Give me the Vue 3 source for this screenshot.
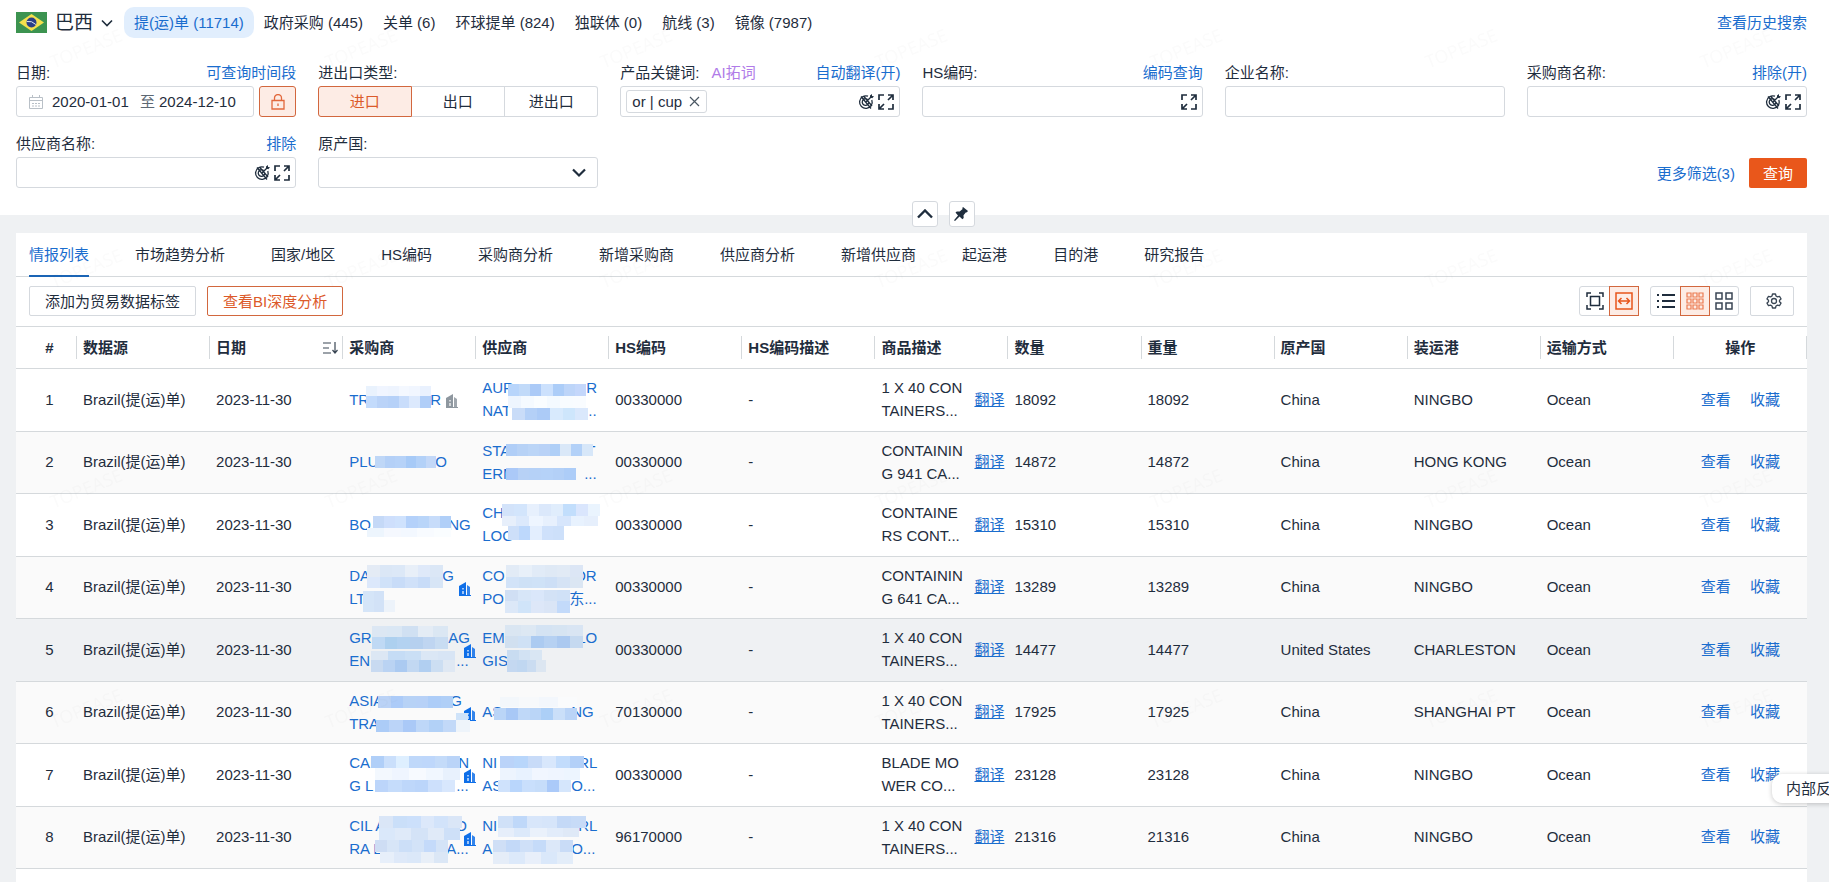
<script setup>
import { ref } from 'vue'

const sources = [
  { name: '提(运)单', count: 11714 },
  { name: '政府采购', count: 445 },
  { name: '关单', count: 6 },
  { name: '环球提单', count: 824 },
  { name: '独联体', count: 0 },
  { name: '航线', count: 3 },
  { name: '镜像', count: 7987 },
]
const activeSource = ref(0)

const directions = ['进口', '出口', '进出口']
const direction = ref('进口')
const startDate = ref('2020-01-01')
const endDate = ref('2024-12-10')

const tabs = ['情报列表', '市场趋势分析', '国家/地区', 'HS编码', '采购商分析', '新增采购商', '供应商分析', '新增供应商', '起运港', '目的港', '研究报告']
const activeTab = ref('情报列表')

const columns = ['数据源', '日期', '采购商', '供应商', 'HS编码', 'HS编码描述', '商品描述', '数量', '重量', '原产国', '装运港', '运输方式']

// line: [visible start, offset of the visible end, visible end]
// mask: [x, y, width, height, colours of the blocks from left to right]
const rows = [
  {
    icon: { x: 103, muted: true },
    buyer: [['TR', 81, 'R']],
    buyerMask: [
      [23, 17, 65, 10, '#e9f2fd #f0f5ff #eef4fe #f4f8ff #f1f6ff #e9f1fe'],
      [23, 27, 65, 12, '#c3dbfc #bad3f8 #b6d1f8 #c9ddfb #dce9fd #b0cef8'],
    ],
    supplier: [['AUR', 104, 'R'], ['NAT', 102, '...']],
    supplierMask: [
      [32, 15, 78, 12, '#b8d5fb #c1daf9 #abcaf7 #cce1fd #accdf8 #bdd5f9 #c4d7fb'],
      [32, 27, 78, 12, '#eef5fe #f5faff #fafdff #f4faff #f8fcff #f9fcff'],
      [36, 39, 76, 12, '#c9dcf8 #b4d0f7 #accbf7 #d8eafd #cee6fc #dae8fc'],
    ],
    hs: '00330000', desc: ['1 X 40 CON', 'TAINERS...'], qty: 18092, origin: 'China', port: 'NINGBO',
  },
  {
    buyer: [['PLU', 86, 'O']],
    buyerMask: [[32, 24, 61, 12, '#bfd7f7 #b4d0f7 #b6d2f8 #a7caf7 #b3d1f8 #c3d8f8']],
    supplier: [['STA', 104, 'T'], ['ERM', 102, '...']],
    supplierMask: [
      [30, 12, 87, 12, '#b0cef7 #b7d2f6 #bbd5f7 #b9d2f7 #afcff7 #dae8f8 #b3d1f8 #d7e7f9'],
      [30, 36, 70, 12, '#abc9f8 #b7d1f6 #b5d1f7 #b5d2f8 #b3d0f7 #adcdf8'],
    ],
    hs: '00330000', desc: ['CONTAININ', 'G 941 CA...'], qty: 14872, origin: 'China', port: 'HONG KONG',
  },
  {
    buyer: [['BO', 99, 'NG']],
    buyerMask: [
      [30, 22, 78, 12, '#c5d9f7 #cedffc #cfe2fd #b4d1fa #b9d5f9 #c7dcfa #b0cff8'],
      [24, 34, 84, 9, '#edf5fd #f5f8fe #f3f8ff #f8fbff #fafdff'],
    ],
    supplier: [['CH', 104, ''], ['LOG', 102, '']],
    supplierMask: [
      [26, 10, 98, 12, '#d3e3fa #d3e5fc #e7f0fd #dbe8fb #e0edfc #c2defc #dae6fd #eaf4fe'],
      [26, 22, 96, 10, '#e7effb #dce9fc #eef5ff #e7f0fd #d7e6fc #e8f2fe #e6effc'],
      [32, 32, 56, 14, '#cddff9 #bdd8fc #e3eefe #cfe1fb #cde0fa'],
    ],
    hs: '00330000', desc: ['CONTAINE', 'RS CONT...'], qty: 15310, origin: 'China', port: 'NINGBO',
  },
  {
    icon: { x: 116 },
    buyer: [['DA', 93, 'G'], ['LTD', 99, '']],
    buyerMask: [
      [24, 8, 76, 12, '#e4ebf5 #dbe7f6 #dce8f7 #e8eff8 #dfe9f9 #dbe7f6'],
      [24, 20, 76, 11, '#dce8fb #d0e2f9 #c8dcf8 #d0e1f9 #c8dcf8 #d7e5f6'],
      [20, 34, 21, 21, '#d5e5f8 #d2e2f7'],
      [41, 43, 11, 12, '#edf3fa'],
    ],
    supplier: [['CO', 92, 'OR'], ['PO', 87, '东...']],
    supplierMask: [
      [30, 8, 77, 12, '#e2ebf6 #e8f0f9 #e1ebf7 #dfe9f5 #e1eaf5 #dce6f5'],
      [30, 20, 77, 11, '#d2e3f8 #cee1f6 #cfe2f7 #cddff6 #d5e3f5 #dbe6f3'],
      [29, 33, 65, 11, '#d0dff4 #d7e6f8 #dae7fa #d3e2f6 #d0e1f7'],
      [29, 44, 65, 12, '#dce8f8 #d0e4f9 #dde7f8 #dae5f6 #c3dafa'],
    ],
    hs: '00330000', desc: ['CONTAININ', 'G 641 CA...'], qty: 13289, origin: 'China', port: 'NINGBO',
  },
  {
    icon: { x: 121 },
    buyer: [['GR', 99, 'AG'], ['EN', 107, '...']],
    buyerMask: [
      [29, 7, 76, 11, '#dce7f3 #dae7f4 #d0e0f2 #e4ecf5 #dbe7f3'],
      [29, 18, 76, 12, '#bfd9f4 #add0ef #b3d2f1 #b6d0ef #bfd5f1 #c8dcf2'],
      [28, 32, 84, 9, '#dce7f4 #c5dcf5 #cadff5 #dbe7f5 #d8e5f5'],
      [28, 41, 84, 12, '#c8daf1 #bad3f3 #abcaf1 #c2d8f2 #b1cff1 #ccdef2 #dfe8f3'],
    ],
    supplier: [['EM', 95, 'LO'], ['GIS', 102, '']],
    supplierMask: [
      [29, 6, 78, 11, '#dae6f2 #dde8f3 #d4e3f3 #d6e4f2 #d9e5f3'],
      [29, 17, 78, 12, '#d1e0f0 #cfe1f5 #accbf1 #b6d1f2 #abc9f0 #c5d9f0'],
      [31, 31, 35, 10, '#c8dcf1 #d2e2f3 #d9e6f3'],
      [31, 41, 39, 12, '#c4d8f1 #c0d7f1 #cadcf1 #dce6f1'],
    ],
    hs: '00330000', desc: ['1 X 40 CON', 'TAINERS...'], qty: 14477, origin: 'United States', port: 'CHARLESTON', hovered: true,
  },
  {
    icon: { x: 121 },
    buyer: [['ASIA', 101, 'G'], ['TRA', 107, '']],
    buyerMask: [
      [35, 14, 75, 12, '#bad2f6 #accbf8 #b7d2f6 #b7d1f7 #adcdf8 #b0cff7'],
      [113, 31, 12, 7, '#cfe3f9'],
      [33, 38, 80, 12, '#acccf7 #bbd4f8 #aac9f7 #bed7f8 #b2d1f7 #c2d9f8'],
      [113, 38, 14, 12, '#eef4fa'],
    ],
    supplier: [['AS', 89, 'NG']],
    supplierMask: [
      [24, 15, 77, 10, '#f3f7fb #f7f9fb #f3f7fc #fafbfc'],
      [18, 26, 83, 12, '#bad5f7 #a8c8f6 #bfd8f8 #bad5f7 #accff7 #cadff9 #bad4f7'],
    ],
    hs: '70130000', desc: ['1 X 40 CON', 'TAINERS...'], qty: 17925, origin: 'China', port: 'SHANGHAI PT',
  },
  {
    icon: { x: 121 },
    buyer: [['CAR', 109, 'N'], ['G L', 107, '...']],
    buyerMask: [
      [28, 12, 89, 12, '#b0cff8 #cadffb #deefff #bfd8fa #bed7fb #c4dbf9 #bad4f8'],
      [32, 24, 85, 12, '#f3f8fe #eff5ff #f7faff #f1f7ff #e8f1fd'],
      [32, 36, 80, 12, '#bcd5fa #c5dcfb #bed7fa #bbd5fa #cde0fc #d8e7fd'],
    ],
    supplier: [['NI', 96, 'RL'], ['AS', 89, 'O...']],
    supplierMask: [
      [24, 12, 84, 12, '#bad3f9 #b8d6fb #c8dbf8 #d8e7fc #c2dcfc #b3d0f8'],
      [24, 24, 80, 12, '#edf4fe #e8f2ff #f1f6ff #eff5ff #edf5ff'],
      [22, 36, 73, 12, '#cfe2fc #b9d6fc #c9dffc #c6ddfa #abcaf9 #d5e6fc'],
    ],
    hs: '00330000', desc: ['BLADE MO', 'WER CO...'], qty: 23128, origin: 'China', port: 'NINGBO',
  },
  {
    icon: { x: 121 },
    buyer: [['CIL A', 106, 'O'], ['RA L', 97, 'A...']],
    buyerMask: [
      [36, 9, 83, 12, '#dae6f7 #cadff9 #cce0fb #dce8fa #d2e3fa #dae6f7'],
      [36, 21, 81, 12, '#dae8fa #dfeaf9 #d4e3f7 #e0eaf8 #cee0f8'],
      [32, 33, 73, 12, '#ceddf4 #d7e5f7 #ccdff8 #d3e3f8 #c4dafa #d4e3f7'],
      [37, 45, 68, 11, '#e7effa #dee9f9 #dbe8f9 #e8eff8 #dbe7f6'],
    ],
    supplier: [['NI', 96, 'RL'], ['A', 89, 'O...']],
    supplierMask: [
      [22, 9, 88, 12, '#d0e1f8 #bfd8f9 #d8e6fa #d6e5fa #c4d9f7 #c7dbf7'],
      [22, 21, 81, 9, '#e6eefa #dce9fa #eaf1fb #e2ecfa #dfe9f7'],
      [17, 33, 80, 12, '#cfdff6 #c3d9f8 #cfe0f8 #c5dbf9 #dce8f9 #c9dcf7'],
      [17, 45, 80, 12, '#e5edf8 #dce9fa #e8effa #dae8fa #e3edf9'],
    ],
    hs: '96170000', desc: ['1 X 40 CON', 'TAINERS...'], qty: 21316, origin: 'China', port: 'NINGBO',
  },
]

function blocks(mask) {
  return mask.flatMap(([x, y, w, h, colours]) => {
    const list = colours.split(' ')
    const step = w / list.length
    return list.map((fill, i) => ({ x: x + i * step, y, w: step, h, fill }))
  })
}
</script>

<template>
  <div class="page">
    <svg class="symbols" aria-hidden="true">
      <symbol id="expand" viewBox="0 0 16 16">
        <g fill="none" stroke="currentColor" stroke-width="1.7">
          <path d="M1 6V1h5M15 10v5h-5M10 1h5v5M15 1l-5 5M1 10v5h5M1 15l5-5" />
        </g>
      </symbol>
      <symbol id="aim" viewBox="0 0 16 16">
        <g fill="none" stroke="currentColor" stroke-width="1.3">
          <path d="M10 2.200A6.300 6.300 0 1 0 13.800 6M9.500 5.400A3.300 3.300 0 1 0 10.800 7.500M7.500 8.500 13 3M3 2.500l10 12M5.500 2l8.500 10" />
        </g>
        <path fill="currentColor" d="M12 3.500V1.500L14 0v2l2 .2L14.300 4.200z" />
      </symbol>
      <symbol id="building" viewBox="0 0 12 14">
        <path fill="currentColor" d="M0 4 7 0v14H0Z" />
        <path fill="#fff" opacity=".6" d="M3 6h2v1.500H3ZM3 9h2v3H3Z" />
        <path fill="currentColor" opacity=".85" d="M8 3l3 2v9H8Z" />
        <path fill="currentColor" d="M0 13h12v1H0Z" />
      </symbol>
    </svg>

    <header class="search">
      <div class="top">
        <button class="country" type="button">
          <svg width="31" height="21" viewBox="0 0 31 21" aria-hidden="true">
            <path fill="#3c9350" d="M0 0h31v21H0z" />
            <path fill="#f4e04d" d="M15.500 2 28 10.500 15.500 19 3 10.500z" />
            <circle cx="15.500" cy="10.500" r="5" fill="#2b3f87" />
            <path d="M10.800 9.500q5-1 9 3" fill="none" stroke="#dfe6f3" />
          </svg>
          <span>巴西</span>
          <svg width="12" height="8" viewBox="0 0 12 8" fill="none" stroke="#1f2d3d" stroke-width="1.600" aria-hidden="true"><path d="m1 1.500 5 5 5-5" /></svg>
        </button>
        <nav class="sources">
          <button v-for="(s, i) in sources" :key="s.name" type="button" :class="{ active: i === activeSource }" @click="activeSource = i">{{ s.name }} ({{ s.count }})</button>
        </nav>
        <a class="history" href="#">查看历史搜索</a>
      </div>

      <form class="filters" @submit.prevent>
        <div class="field">
          <div class="caption"><label for="from">日期:</label><a href="#">可查询时间段</a></div>
          <div class="dates">
            <div class="box range">
              <svg width="14" height="14" viewBox="0 0 14 14" fill="none" stroke="#b9c0c7" aria-hidden="true"><path d="M.5 2.500h13v11H.5zM.5 5.500h13M3.500 0v3M10.500 0v3M3 8.500h2M6 8.500h2M9 8.500h2M3 11h2M6 11h2M9 11h2" /></svg>
              <input id="from" v-model="startDate" type="text">
              <span>至</span>
              <input v-model="endDate" type="text" aria-label="结束日期">
            </div>
            <button class="lock" type="button" aria-label="锁定日期">
              <svg width="14" height="16" viewBox="0 0 14 16" fill="none" stroke="#e2683c" stroke-width="1.300" aria-hidden="true"><path d="M1 6.500h12V15H1zM3.500 6.500V4a3.500 3.500 0 0 1 7 0v2.500M7 9.500V12" /></svg>
            </button>
          </div>
        </div>

        <div class="field">
          <div class="caption"><span id="direction">进出口类型:</span></div>
          <div class="segments" role="group" aria-labelledby="direction">
            <button v-for="d in directions" :key="d" type="button" :class="{ active: d === direction }" @click="direction = d">{{ d }}</button>
          </div>
        </div>

        <div class="field">
          <div class="caption"><label for="keyword">产品关键词:</label><a class="ai" href="#">AI拓词</a><a class="end" href="#">自动翻译(开)</a></div>
          <div class="box">
            <span class="tag">or | cup
              <button type="button" aria-label="移除"><svg width="11" height="11" viewBox="0 0 11 11" stroke="#4b5763" stroke-width="1.200" aria-hidden="true"><path d="m1 1 9 9M10 1l-9 9" /></svg></button>
            </span>
            <input id="keyword" type="text">
            <svg width="16" height="16" aria-hidden="true"><use href="#aim" /></svg>
            <svg width="16" height="16" aria-hidden="true"><use href="#expand" /></svg>
          </div>
        </div>

        <div class="field">
          <div class="caption"><label for="hs">HS编码:</label><a href="#">编码查询</a></div>
          <div class="box"><input id="hs" type="text"><svg width="16" height="16" aria-hidden="true"><use href="#expand" /></svg></div>
        </div>

        <div class="field">
          <div class="caption"><label for="company">企业名称:</label></div>
          <div class="box"><input id="company" type="text"></div>
        </div>

        <div class="field">
          <div class="caption"><label for="buyer">采购商名称:</label><a href="#">排除(开)</a></div>
          <div class="box">
            <input id="buyer" type="text">
            <svg width="16" height="16" aria-hidden="true"><use href="#aim" /></svg>
            <svg width="16" height="16" aria-hidden="true"><use href="#expand" /></svg>
          </div>
        </div>

        <div class="field">
          <div class="caption"><label for="supplier">供应商名称:</label><a href="#">排除</a></div>
          <div class="box">
            <input id="supplier" type="text">
            <svg width="16" height="16" aria-hidden="true"><use href="#aim" /></svg>
            <svg width="16" height="16" aria-hidden="true"><use href="#expand" /></svg>
          </div>
        </div>

        <div class="field">
          <div class="caption"><label for="origin">原产国:</label></div>
          <div class="pick">
            <select id="origin"><option value=""></option></select>
            <svg width="14" height="10" viewBox="0 0 14 10" fill="none" stroke="#1f2d3d" stroke-width="2.200" aria-hidden="true"><path d="m1 1.500 6 6 6-6" /></svg>
          </div>
        </div>

        <div class="submit">
          <a href="#">更多筛选(3)</a>
          <button type="submit">查询</button>
        </div>
      </form>

      <div class="handles">
        <button type="button" aria-label="收起"><svg width="16" height="10" viewBox="0 0 16 10" fill="none" stroke="#1f2d3d" stroke-width="2.400" aria-hidden="true"><path d="m1 8.500 7-7 7 7" /></svg></button>
        <button type="button" aria-label="固定"><svg width="15" height="14" viewBox="0 0 15 14" aria-hidden="true"><path fill="#1f2d3d" d="m9 0 5 4-1.300 1.500-.7-.2-2.500 3 .2 2.700-1.300 1.300L5.500 9.600 1 14l-1-.800L4 8.400 1.500 5.600l1.300-1.100 2.900.1L8.600 2 8.300 1z" /></svg></button>
      </div>
    </header>

    <main class="panel">
      <nav class="tabs">
        <button v-for="t in tabs" :key="t" type="button" :class="{ active: t === activeTab }" @click="activeTab = t">{{ t }}</button>
      </nav>

      <div class="toolbar">
        <button class="plain" type="button">添加为贸易数据标签</button>
        <button class="plain accent" type="button">查看BI深度分析</button>
        <div class="group push">
          <button type="button" aria-label="适应内容"><svg width="18" height="18" viewBox="0 0 18 18" fill="none" stroke="#1f2d3d" stroke-width="1.500" aria-hidden="true"><path d="M1 5V1h4M13 1h4v4M17 13v4h-4M5 17H1v-4M4.500 4.500h9v9h-9z" /></svg></button>
          <button class="active" type="button" aria-label="适应宽度"><svg width="18" height="18" viewBox="0 0 18 18" fill="none" stroke="#e8541a" stroke-width="1.500" aria-hidden="true"><path d="M1 1h16v16H1zM3.500 9h11M6.500 6l-3 3 3 3M11.500 6l3 3-3 3" /></svg></button>
        </div>
        <div class="group">
          <button type="button" aria-label="列表"><svg width="18" height="16" viewBox="0 0 18 16" stroke="#1f2d3d" stroke-width="2" aria-hidden="true"><path d="M0 2h2M5 2h13M0 8h2M5 8h13M0 14h2M5 14h13" /></svg></button>
          <button class="active" type="button" aria-label="紧凑表格"><svg width="18" height="18" viewBox="0 0 18 18" fill="none" stroke="#ec7a50" stroke-width="1.200" aria-hidden="true"><path d="M1 1h4v4H1zM7 1h4v4H7zM13 1h4v4h-4zM1 7h4v4H1zM7 7h4v4H7zM13 7h4v4h-4zM1 13h4v4H1zM7 13h4v4H7zM13 13h4v4h-4z" /></svg></button>
          <button type="button" aria-label="卡片"><svg width="18" height="18" viewBox="0 0 18 18" fill="none" stroke="#3a4654" stroke-width="1.500" aria-hidden="true"><path d="M1 1h6v6H1zM11 1h6v6h-6zM1 11h6v6H1zM11 11h6v6h-6z" /></svg></button>
        </div>
        <button class="plain gear" type="button" aria-label="设置"><svg width="16" height="16" viewBox="0 0 16 16" fill="none" stroke="#3a4654" stroke-width="1.300" stroke-linejoin="round" aria-hidden="true"><path d="M6.500 1h3l.5 2 1.500.9 2-.6 1.500 2.600L13.500 7.200v1.600l1.500 1.300-1.500 2.600-2-.6-1.500.9-.5 2h-3L6 13l-1.500-.9-2 .6L1 10.100l1.500-1.300V7.200L1 5.900l1.500-2.600 2 .6L6 3z" /><circle cx="8" cy="8" r="2.500" /></svg></button>
      </div>

      <table>
        <thead>
          <tr>
            <th class="index">#</th>
            <th v-for="c in columns" :key="c">
              <div class="heading">{{ c }}
                <svg v-if="c === '日期'" width="15" height="12" viewBox="0 0 15 12" fill="none" stroke="#3a4654" stroke-width="1.200" aria-hidden="true"><path d="M0 1h8M0 6h6M0 11h8M12 0v11M9.500 8l2.500 3 2.500-3" /></svg>
              </div>
            </th>
            <th class="actions">操作</th>
          </tr>
        </thead>
        <tbody>
          <tr v-for="(r, i) in rows" :key="i" :class="{ hovered: r.hovered }">
            <td class="index">{{ i + 1 }}</td>
            <td>Brazil(提(运)单)</td>
            <td>2023-11-30</td>
            <td class="masked">
              <a v-for="(l, n) in r.buyer" :key="n" class="line" href="#"><span :style="{ width: l[1] + 'px' }">{{ l[0] }}</span>{{ l[2] }}</a>
              <svg v-if="r.icon" class="badge" :class="{ muted: r.icon.muted }" :style="{ left: r.icon.x + 'px' }" width="12" height="14" aria-hidden="true"><use href="#building" /></svg>
              <svg class="mask" aria-hidden="true" shape-rendering="crispEdges"><rect v-for="(b, n) in blocks(r.buyerMask)" :key="n" :x="b.x" :y="b.y" :width="b.w" :height="b.h" :fill="b.fill" /></svg>
            </td>
            <td class="masked">
              <a v-for="(l, n) in r.supplier" :key="n" class="line" href="#"><span :style="{ width: l[1] + 'px' }">{{ l[0] }}</span>{{ l[2] }}</a>
              <svg class="mask" aria-hidden="true" shape-rendering="crispEdges"><rect v-for="(b, n) in blocks(r.supplierMask)" :key="n" :x="b.x" :y="b.y" :width="b.w" :height="b.h" :fill="b.fill" /></svg>
            </td>
            <td>{{ r.hs }}</td>
            <td>-</td>
            <td>
              <div class="goods"><div>{{ r.desc[0] }}<br>{{ r.desc[1] }}</div><a href="#">翻译</a></div>
            </td>
            <td>{{ r.qty }}</td>
            <td>{{ r.qty }}</td>
            <td>{{ r.origin }}</td>
            <td>{{ r.port }}</td>
            <td>Ocean</td>
            <td class="actions"><div class="links"><a href="#">查看</a><a href="#">收藏</a></div></td>
          </tr>
        </tbody>
      </table>
    </main>

    <button class="feedback" type="button">内部反馈</button>

    <svg class="watermark" width="100%" height="100%" aria-hidden="true">
      <defs>
        <pattern id="brand" width="275" height="220" patternUnits="userSpaceOnUse">
          <text x="86" y="55" text-anchor="middle" font-size="18" transform="rotate(-22 86 48)">TOPEASE</text>
        </pattern>
      </defs>
      <rect width="100%" height="100%" fill="url(#brand)" />
    </svg>
  </div>
</template>

<style>
body {
  margin: 0;
  overflow: hidden;
}
</style>

<style scoped>
.page {
  position: relative;
  display: flex;
  flex-direction: column;
  height: 100vh;
  overflow: hidden;
  background: #eff1f3;
  color: #1f2d3d;
  font-family: "Liberation Sans", "Noto Sans CJK SC", sans-serif;
  font-size: 15px;
  line-height: 23px;
}
.page * {
  box-sizing: border-box;
}
.symbols {
  position: absolute;
  width: 0;
  height: 0;
}
svg {
  flex: none;
}
a {
  color: #1a6dce;
  text-decoration: none;
}
button,
input,
select {
  margin: 0;
  padding: 0;
  border: 0;
  background: none;
  color: inherit;
  font: inherit;
  white-space: nowrap;
}
.search {
  position: relative;
  flex: none;
  padding: 7px 22px 27px 16px;
  background: #fff;
}
.top {
  display: flex;
  align-items: center;
  height: 31px;
}
.country {
  display: flex;
  align-items: center;
  gap: 8px;
  margin-right: 11px;
  font-size: 19px;
}
.sources {
  display: flex;
}
.sources button {
  height: 31px;
  padding: 0 10px;
  border-radius: 10px;
}
.sources .active {
  background: #e1eefd;
  color: #1a6dce;
}
.history {
  margin-left: auto;
}
.filters {
  display: grid;
  grid-template-columns: repeat(6, minmax(0, 1fr));
  gap: 14px 22px;
  margin-top: 22px;
}
.caption {
  display: flex;
  justify-content: space-between;
  line-height: 26px;
}
.caption .ai {
  margin-left: 12px;
  color: #b07be8;
}
.caption .end {
  margin-left: auto;
}
.box {
  display: flex;
  align-items: center;
  gap: 4px;
  height: 31px;
  padding: 0 5px;
  border: 1px solid #d5d9de;
  border-radius: 3px;
}
.box input {
  flex: 1;
  min-width: 0;
  height: 100%;
  outline: 0;
}
.dates {
  display: flex;
  gap: 5px;
}
.range {
  flex: 1;
  gap: 9px;
  padding: 0 12px;
}
.range input {
  flex: 0 0 79px;
}
.range span {
  margin-right: -5px;
  color: #5d6873;
}
.lock {
  display: grid;
  place-items: center;
  width: 37px;
  height: 31px;
  border: 1px solid #d2673e;
  border-radius: 3px;
  background: #fdece5;
}
.segments {
  display: grid;
  grid-template-columns: repeat(3, 1fr);
}
.segments button {
  height: 31px;
  border: 1px solid #d5d9de;
  border-left-width: 0;
}
.segments button:first-child {
  border-left-width: 1px;
  border-radius: 3px 0 0 3px;
}
.segments button:last-child {
  border-radius: 0 3px 3px 0;
}
.segments .active {
  border-color: #d2673e;
  background: #fdece5;
  color: #dc5a2a;
}
.tag {
  display: flex;
  align-items: center;
  gap: 7px;
  height: 23px;
  padding: 0 6px 0 5px;
  border: 1px solid #d5d9de;
  border-radius: 3px;
  line-height: 21px;
  white-space: nowrap;
}
.tag button {
  display: flex;
}
.pick {
  display: grid;
  align-items: center;
}
.pick > * {
  grid-area: 1 / 1;
}
.pick select {
  width: 100%;
  height: 31px;
  border: 1px solid #d5d9de;
  border-radius: 3px;
  appearance: none;
}
.pick svg {
  justify-self: end;
  margin-right: 12px;
  pointer-events: none;
}
.submit {
  display: flex;
  grid-column: 3 / -1;
  align-items: center;
  align-self: end;
  justify-content: flex-end;
  gap: 14px;
}
.submit button {
  height: 30px;
  padding: 0 14px;
  border-radius: 2px;
  background: #e9571b;
  color: #fff;
}
.handles {
  position: absolute;
  bottom: -12px;
  left: calc(50% - 3px);
  display: flex;
  gap: 11px;
}
.handles button {
  display: grid;
  place-items: center;
  width: 26px;
  height: 26px;
  border: 1px solid #d5d9de;
  border-radius: 3px;
  background: #fff;
}
.panel {
  flex: 1;
  min-height: 0;
  margin: 18px 22px 0 16px;
  overflow: hidden;
  background: #fff;
}
.tabs {
  display: flex;
  gap: 46px;
  height: 44px;
  padding: 0 13px;
  border-bottom: 1px solid #d5d9dc;
}
.tabs button {
  height: 44px;
  border-bottom: 2px solid transparent;
}
.tabs .active {
  border-bottom-color: #1a64b5;
  color: #1a6dce;
}
.toolbar {
  display: flex;
  gap: 11px;
  height: 50px;
  padding: 9px 13px;
  border-bottom: 1px solid #d5d9dc;
}
.plain {
  height: 30px;
  padding: 0 15px;
  border: 1px solid #d5d9de;
  border-radius: 2px;
}
.plain.accent {
  border-color: #d2673e;
  color: #dc5a2a;
}
.plain.gear {
  display: grid;
  place-items: center;
  width: 44px;
}
.push {
  margin-left: auto;
}
.group {
  display: flex;
  height: 30px;
  border: 1px solid #d5d9de;
  border-radius: 3px;
}
.group button {
  display: grid;
  place-items: center;
  width: 30px;
  height: 30px;
  margin: -1px -1px -1px 0;
  border: 1px solid transparent;
}
.group .active {
  border-color: #d2673e;
  background: #fdece5;
}
table {
  width: 100%;
  border-spacing: 0;
  table-layout: fixed;
}
th,
td {
  position: relative;
  padding: 0 0 0 6px;
  border-bottom: 1px solid #d5d9dc;
  text-align: left;
  white-space: nowrap;
}
th {
  height: 42px;
}
th::after {
  position: absolute;
  top: 9px;
  right: 0;
  width: 1px;
  height: 23px;
  background: #d5d9dc;
  content: "";
}
.heading {
  display: flex;
  align-items: center;
  justify-content: space-between;
  padding-right: 5px;
}
.index {
  width: 61px;
  text-align: center;
}
.actions {
  padding-left: 0;
  text-align: center;
}
td {
  height: 63px;
  padding-bottom: 2px;
}
tr:nth-child(even) td {
  height: 62px;
  background: #fafafa;
}
tr.hovered td {
  background: #eff1f3;
}
.line {
  display: block;
}
.line span {
  display: inline-block;
}
.mask {
  position: absolute;
  top: 0;
  left: 0;
  width: 100%;
  height: 100%;
  pointer-events: none;
}
.badge {
  position: absolute;
  top: 25px;
  color: #0f6fe8;
}
.badge.muted {
  color: #8e979f;
}
.goods {
  display: flex;
  align-items: center;
  justify-content: space-between;
  padding-right: 4px;
}
.goods a {
  text-decoration: underline;
}
.links {
  display: flex;
  justify-content: center;
  gap: 19px;
}
.feedback {
  position: absolute;
  right: -31px;
  bottom: 79px;
  height: 29px;
  padding: 0 14px;
  border-radius: 10px;
  background: #fff;
  box-shadow: 0 1px 5px rgba(0, 0, 0, 0.22);
}
.watermark {
  position: absolute;
  inset: 0;
  fill: rgba(40, 50, 60, 0.02);
  font-family: "Noto Sans", sans-serif;
  pointer-events: none;
}
</style>
